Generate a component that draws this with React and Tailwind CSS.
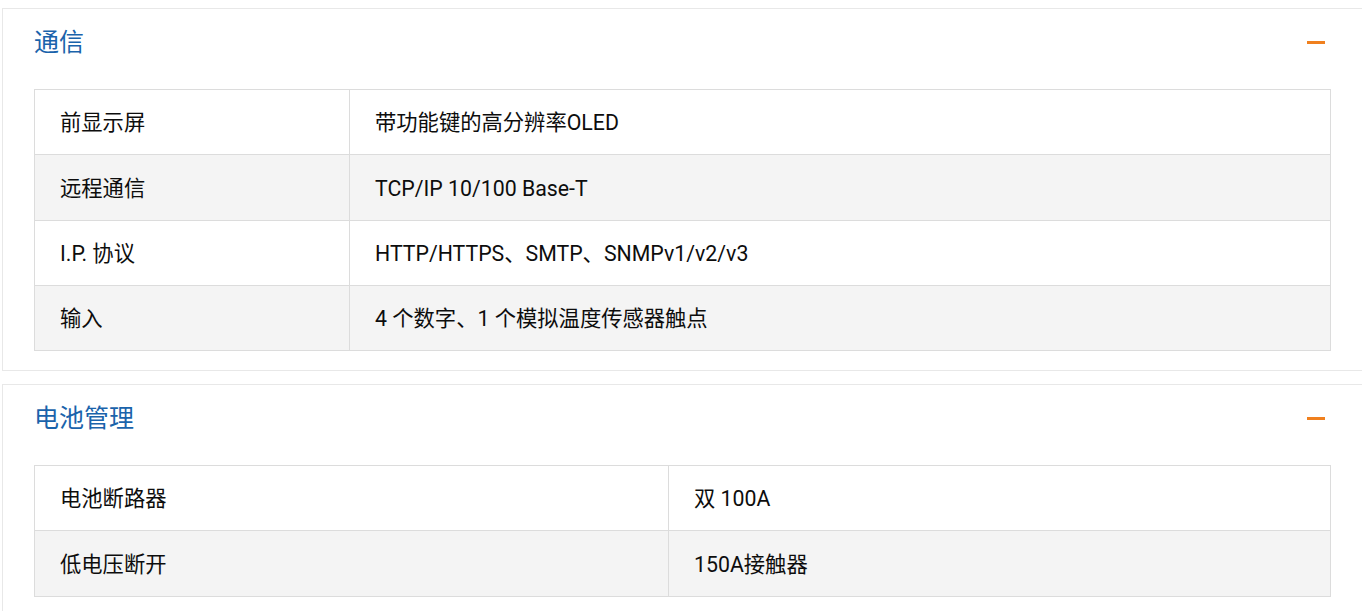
import React from 'react';

const sections = [
    {
        title: "通信",
        colWidth: "w-[315px]",
        rows: [
            ["前显示屏", "带功能键的高分辨率OLED", "h-[64px]"],
            ["远程通信", "TCP/IP 10/100 Base-T", "h-[66px]"],
            ["I.P. 协议", "HTTP/HTTPS、SMTP、SNMPv1/v2/v3", "h-[65px]"],
            ["输入", "4 个数字、1 个模拟温度传感器触点", "h-[65px]"],
        ],
    },
    {
        title: "电池管理",
        colWidth: "w-[634px]",
        rows: [
            ["电池断路器", "双 100A", "h-[64px]"],
            ["低电压断开", "150A接触器", "h-[66px]"],
        ],
    },
];

const SpecSection = ({ title, rows, colWidth }) => {
    return (
        <div className="w-[1361px] shrink-0 border border-[#e8e8e8] bg-white px-[31px] pb-[19px]">
            {/* header with collapse toggle */}
            <div className="flex h-[66px] items-center justify-between">
                <h3 className="text-[25px] font-normal leading-none text-[#1a63ab]">{title}</h3>
                <span className="mr-[6px] block h-[3px] w-[18px] bg-[#f0801e]" />
            </div>
            <div className="mt-[14px] border border-[#dcdcdc]">
                {rows.map(([label, value, h], i) => (
                    <div
                        key={label}
                        className={`flex ${h} ${i > 0 ? "border-t border-[#dcdcdc]" : ""} ${i % 2 === 1 ? "bg-[#f4f4f4]" : "bg-white"}`}
                    >
                        <div className={`${colWidth} flex shrink-0 items-center border-r border-[#dcdcdc] pl-[25px] pt-[2px]`}>
                            {label}
                        </div>
                        <div className="flex flex-1 items-center pl-[25px] pt-[2px]">{value}</div>
                    </div>
                ))}
            </div>
        </div>
    );
};

export default function App() {
    return (
        <div
            className="min-h-screen w-screen overflow-hidden bg-white pt-[8px] pl-[2px] text-[21.3px] text-[#0d0d0d]"
            style={{ fontFamily: 'Roboto, "Noto Sans CJK SC", sans-serif' }}
        >
            <div className="flex flex-col gap-[13px]">
                {sections.map((s) => (
                    <SpecSection key={s.title} {...s} />
                ))}
            </div>
        </div>
    );
}
